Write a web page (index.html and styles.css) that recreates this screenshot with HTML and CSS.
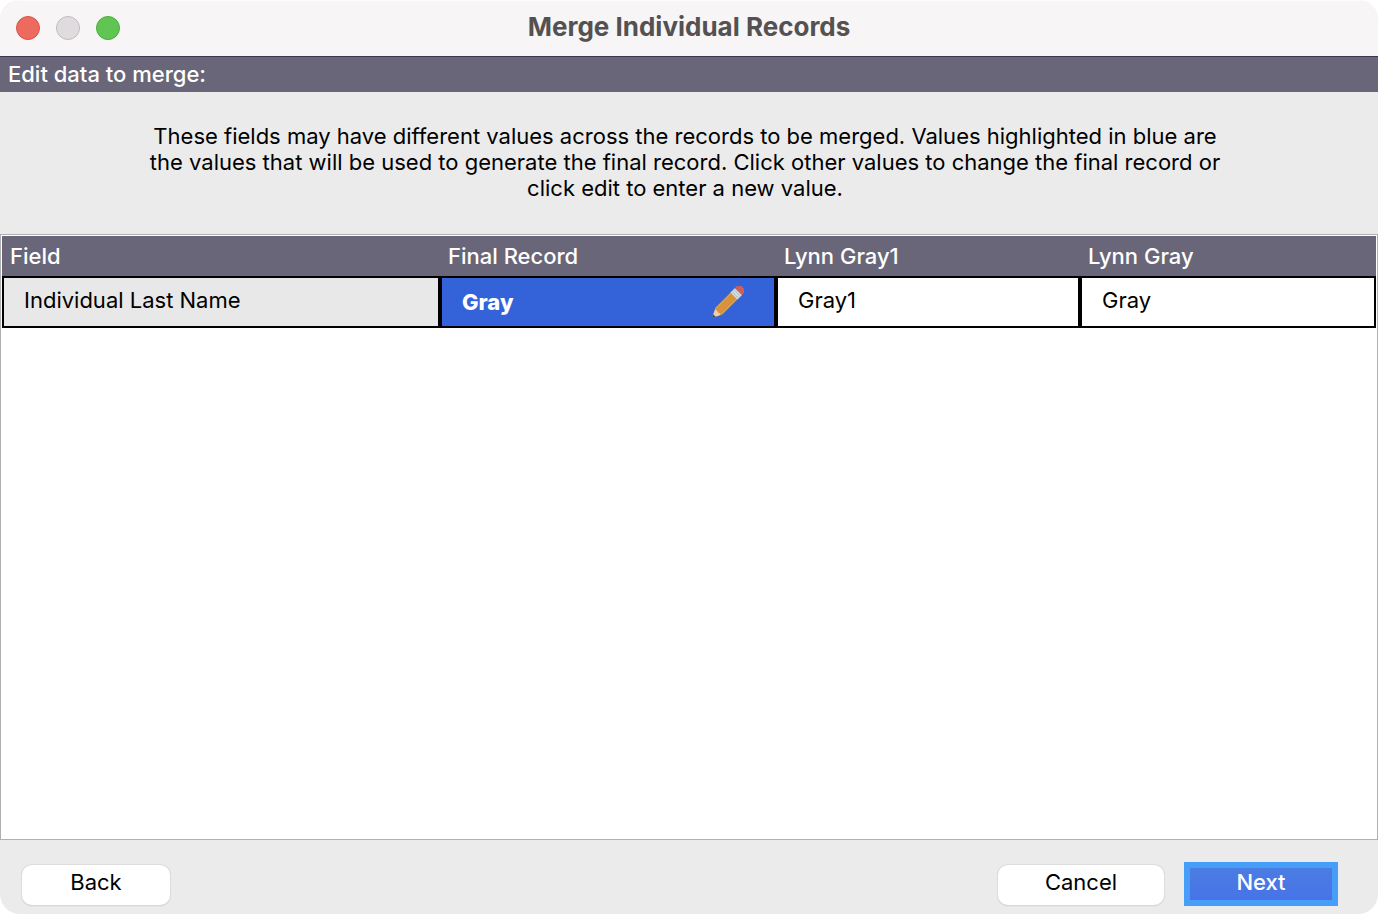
FILE: index.html
```html
<!DOCTYPE html>
<html lang="en">
<head>
<meta charset="utf-8">
<title>Merge Individual Records</title>
<link rel="stylesheet" href="styles.css">
</head>
<body>
<main class="window">
  <header class="titlebar">
    <div class="lights">
      <button class="light light-close" type="button" aria-label="Close"></button>
      <button class="light light-minimize" type="button" aria-label="Minimize" disabled></button>
      <button class="light light-zoom" type="button" aria-label="Zoom"></button>
    </div>
    <h1 class="title">Merge Individual Records</h1>
  </header>
  <h2 class="step">Edit data to merge:</h2>
  <p class="intro">These fields may have different values across the records to be merged. Values highlighted in blue are the values that will be used to generate the final record. Click other values to change the final record or click edit to enter a new value.</p>
  <section class="records">
    <table class="grid">
      <colgroup>
        <col class="col-field">
        <col class="col-final">
        <col class="col-first">
        <col class="col-second">
      </colgroup>
      <thead>
        <tr><th scope="col">Field</th><th scope="col">Final Record</th><th scope="col">Lynn Gray1</th><th scope="col">Lynn Gray</th></tr>
      </thead>
      <tbody>
        <tr>
          <th class="field" scope="row">Individual Last Name</th>
          <td class="final">
            <div class="final-value">
              <span>Gray</span>
              <button class="edit" type="button" aria-label="Edit">
                <svg viewBox="0 0 32 32" width="32" height="32" aria-hidden="true">
                  <g transform="translate(0 32) rotate(-45)">
                    <path d="M0 0 L9 -4.4 L9 4.4 Z" fill="#f3cfa0"/>
                    <path d="M0 0 L3.4 -1.7 L3.4 1.7 Z" fill="#3d3f4c"/>
                    <path d="M8 -4 L10 -4.7 H32 V4.7 H10 L8 4 L9.2 2 L8 0 L9.2 -2 Z" fill="#e28f37"/>
                    <path d="M9 -4.4 L10 -4.7 H32 V-3 H9 Z M9 3 H32 V4.7 H10 L9 4.4 Z" fill="#dd9f3f"/>
                    <path d="M9 -2.4 H32 M9 2.4 H32" stroke="#b89a4c" stroke-width="0.9"/>
                    <path d="M31 -5 H37.5 V5 H31 Z" fill="#d5dcdc"/>
                    <path d="M32.8 -5 V5 M35.6 -5 V5" stroke="#98a8b4" stroke-width="0.9" stroke-dasharray="2 1"/>
                    <path d="M37.5 -5 H39.5 Q43.5 -4.5 43.5 0 Q43.5 4.5 39.5 5 H37.5 Z" fill="#cf5f58"/>
                  </g>
                </svg>
              </button>
            </div>
          </td>
          <td>Gray1</td>
          <td>Gray</td>
        </tr>
      </tbody>
    </table>
  </section>
  <footer class="actions">
    <button class="button button-back" type="button">Back</button>
    <button class="button button-cancel" type="button">Cancel</button>
    <button class="button-next" type="button">Next</button>
  </footer>
</main>
</body>
</html>
```
FILE: styles.css
```css
* { box-sizing: border-box; }

body {
  margin: 0;
  background: #fff;
  color: #000;
  font: 22px/26px Inter, "Liberation Sans", sans-serif;
}

button {
  font: inherit;
  color: inherit;
  border: 0;
  padding: 0;
}

.window {
  display: flex;
  flex-direction: column;
  min-height: 100vh;
  background: #ebebeb;
  border-radius: 20px;
  overflow: hidden;
}

.titlebar {
  display: grid;
  grid-template-columns: 1fr auto 1fr;
  align-items: center;
  height: 56px;
  padding: 0 16px;
  background: #f7f5f6;
  box-shadow: inset 0 1px #fdfcfd;
}

.lights { display: flex; gap: 16px; }

.light {
  width: 24px;
  height: 24px;
  border-radius: 50%;
  border: 1px solid;
}

.light-close { background: #ec6a5e; border-color: #d8544a; }
.light-minimize { background: #dfdbde; border-color: #bfbcbe; }
.light-zoom { background: #61c554; border-color: #4eaa42; }

.title {
  margin: 0;
  padding-bottom: 2px;
  color: #535152;
  font-size: 26px;
  line-height: 32px;
  font-weight: 700;
}

.step {
  margin: 0;
  padding: 4px 8px 5px;
  border-top: 1px solid #3a364f;
  background: #686678;
  color: #fff;
  font-size: 22px;
  font-weight: 500;
}

.intro {
  max-width: 1156px;
  margin: 0 auto;
  padding: 31px 36px 33px 28px;
  text-align: center;
}

.records {
  flex: 1;
  padding: 1px;
  border: 1px solid #b0b0b0;
  background: #fff;
}

.grid {
  width: 100%;
  table-layout: fixed;
  border-collapse: separate;
  border-spacing: 0;
}

.col-field { width: 438px; }
.col-final { width: 336px; }
.col-first { width: 304px; }

.grid thead th {
  height: 40px;
  padding: 0 8px;
  background: #686678;
  color: #fff;
  font-weight: 500;
  text-align: left;
}

.grid tbody th,
.grid tbody td {
  height: 52px;
  padding: 0 20px 4px;
  border: 2px solid #000;
  background: #fff;
  font-weight: 400;
  text-align: left;
}

.grid tbody .field { background: #e8e8e8; }

.grid tbody .final {
  padding: 0 30px 0 20px;
  background: #3362d9;
  color: #fff;
  font-weight: 800;
}

.final-value {
  display: flex;
  align-items: center;
  justify-content: space-between;
}

.edit { display: flex; background: none; }

.actions {
  display: flex;
  align-items: center;
  height: 74px;
  padding: 14px 40px 0 22px;
}

.button {
  height: 40px;
  margin-top: 2px;
  padding-bottom: 6px;
  border-radius: 10px;
  background: #fff;
  box-shadow: 0 0 1px 1px #dcdcdc, 0 1px 1px #b8b8b8;
}

.button-back { width: 148px; margin-right: auto; }
.button-cancel { width: 166px; margin-right: 20px; }

.button-next {
  width: 154px;
  height: 44px;
  padding-bottom: 4px;
  border: 6px solid #479ef8;
  background: linear-gradient(#4b7de3, #4773e8);
  color: #fff;
  font-weight: 500;
}
```
